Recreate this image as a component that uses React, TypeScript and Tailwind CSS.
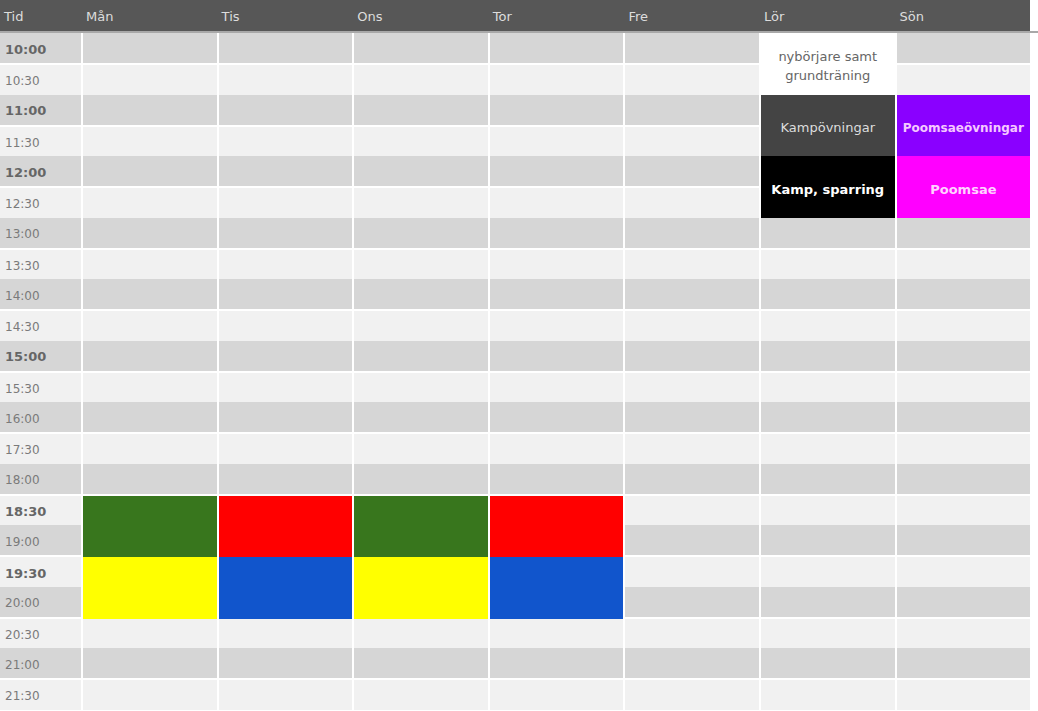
const days = ["Mån", "Tis", "Ons", "Tor", "Fre", "Lör", "Sön"];

const times = [
  "10:00", "10:30", "11:00", "11:30", "12:00", "12:30", "13:00", "13:30",
  "14:00", "14:30", "15:00", "15:30", "16:00", "17:30", "18:00", "18:30",
  "19:00", "19:30", "20:00", "20:30", "21:00", "21:30",
];

const boldTimes = ["10:00", "11:00", "12:00", "15:00", "18:30", "19:30"];

interface Pass {
  day: number;
  row: number;
  bg: string;
  label?: string;
  text?: string;
}

// each pass covers two half-hour rows
const passes: Pass[] = [
  { day: 5, row: 0, bg: "bg-white", label: "nybörjare samt grundträning", text: "text-[#666] text-[13px] leading-[19px] px-3" },
  { day: 5, row: 2, bg: "bg-[#444444]", label: "Kampövningar", text: "text-[#dddddd] text-[13px]" },
  { day: 6, row: 2, bg: "bg-[#8a00ff]", label: "Poomsaeövningar", text: "text-[#f5c8ff] text-[12px] font-bold" },
  { day: 5, row: 4, bg: "bg-black", label: "Kamp, sparring", text: "text-white text-[13px] font-bold" },
  { day: 6, row: 4, bg: "bg-[#ff00ff]", label: "Poomsae", text: "text-[#ffd2ff] text-[13px] font-bold" },
  { day: 0, row: 15, bg: "bg-[#38761d]" },
  { day: 1, row: 15, bg: "bg-[#ff0000]" },
  { day: 2, row: 15, bg: "bg-[#38761d]" },
  { day: 3, row: 15, bg: "bg-[#ff0000]" },
  { day: 0, row: 17, bg: "bg-[#ffff00]" },
  { day: 1, row: 17, bg: "bg-[#1155cc]" },
  { day: 2, row: 17, bg: "bg-[#ffff00]" },
  { day: 3, row: 17, bg: "bg-[#1155cc]" },
];

const findPass = (day: number, row: number) => passes.find((p) => p.day === day && p.row === row);
const isCovered = (day: number, row: number) => passes.some((p) => p.day === day && p.row === row - 1);

export default function App() {
  return (
    <div className="w-[1038px] h-[711px] bg-white overflow-hidden font-['DejaVu_Sans',Verdana,sans-serif]">
      <div className="w-[1030px] h-[31px] pt-[2px] bg-[#575757] grid grid-cols-[81px_repeat(7,133.6px)] gap-x-[2px] items-center text-[13px] text-[#dddddd]">
        <div className="pl-[4px]">Tid</div>
        {days.map((d) => (
          <div key={d} className="pl-[3px]">{d}</div>
        ))}
      </div>
      <div className="w-full h-[2px] bg-[#a8a8a8]" />

      <div className="w-[1030px] grid grid-cols-[81px_repeat(7,133.6px)] grid-rows-[repeat(11,32px_29.5px)] gap-x-[2px]">
        {times.map((t, r) => {
          const dark = r % 2 === 0;
          const rowCls = dark ? "bg-[#d6d6d6] border-b-2 border-white" : "bg-[#f1f1f1]";
          return [
            <div
              key={t}
              className={`${rowCls} flex items-center pl-[5px] pt-[3px] ${boldTimes.includes(t) ? "text-[13px] font-bold text-[#666]" : "text-[12px] text-[#7a7a7a]"}`}
            >
              {t}
            </div>,
            ...days.map((d, i) => {
              if (isCovered(i, r)) return null;
              const p = findPass(i, r);
              if (p) {
                return (
                  <div
                    key={d + t}
                    className={`${p.bg} row-span-2 flex items-center justify-center text-center pt-[5px] ${p.text ?? ""}`}
                  >
                    {p.label}
                  </div>
                );
              }
              return <div key={d + t} className={rowCls} />;
            }),
          ];
        })}
      </div>
    </div>
  );
}
